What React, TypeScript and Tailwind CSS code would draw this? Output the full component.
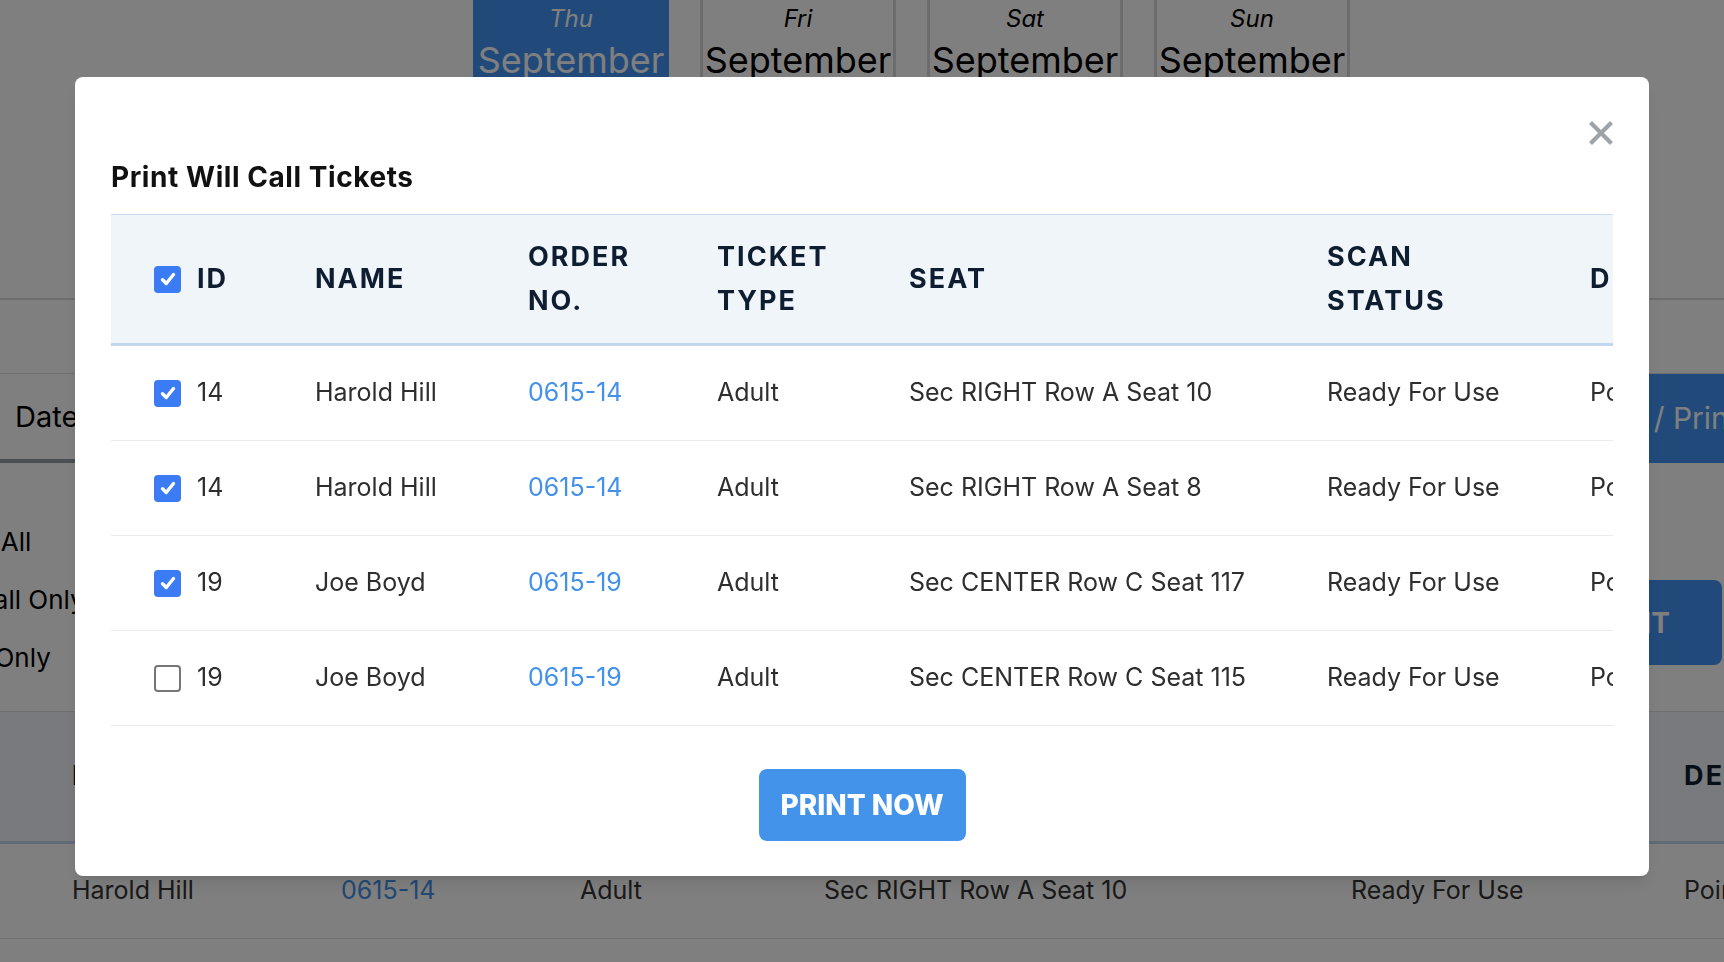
import clsx from 'clsx';

type Ticket = {
  id: number;
  name: string;
  order: string;
  type: string;
  seat: string;
  status: string;
  delivery: string;
  checked: boolean;
};

const tickets: Ticket[] = [
  { id: 14, name: 'Harold Hill', order: '0615-14', type: 'Adult', seat: 'Sec RIGHT Row A Seat 10', status: 'Ready For Use', delivery: 'Point of Sale', checked: true },
  { id: 14, name: 'Harold Hill', order: '0615-14', type: 'Adult', seat: 'Sec RIGHT Row A Seat 8', status: 'Ready For Use', delivery: 'Point of Sale', checked: true },
  { id: 19, name: 'Joe Boyd', order: '0615-19', type: 'Adult', seat: 'Sec CENTER Row C Seat 117', status: 'Ready For Use', delivery: 'Point of Sale', checked: true },
  { id: 19, name: 'Joe Boyd', order: '0615-19', type: 'Adult', seat: 'Sec CENTER Row C Seat 115', status: 'Ready For Use', delivery: 'Point of Sale', checked: false },
];

const days = [
  { day: 'Thu', month: 'September', active: true },
  { day: 'Fri', month: 'September', active: false },
  { day: 'Sat', month: 'September', active: false },
  { day: 'Sun', month: 'September', active: false },
];

// column tracks of the modal table (first one holds checkbox + id)
const modalCols = 'grid-cols-[204px_213px_189px_192px_418px_263px_260px]';
const pageCols = 'grid-cols-[269px_239px_244px_527px_333px_300px]';

function Checkbox({ checked }: { checked: boolean }) {
  if (!checked) {
    return <span className="h-[27px] w-[27px] shrink-0 rounded-[4px] border-2 border-[#767676] bg-white" />;
  }
  return (
    <span className="flex h-[27px] w-[27px] shrink-0 items-center justify-center rounded-[4px] bg-[#3b7bf4]">
      <svg viewBox="0 0 16 16" className="h-[20px] w-[20px]" fill="none" stroke="white" strokeWidth="2.7" strokeLinecap="round" strokeLinejoin="round">
        <path d="M3.6 8.6 6.6 11.6 12.4 4.4" />
      </svg>
    </span>
  );
}

function HeaderCell({ lines, className }: { lines: string[]; className?: string }) {
  return (
    <div className={className}>
      {lines.map((l) => (
        <span key={l} className="block">
          {l}
        </span>
      ))}
    </div>
  );
}

function BackgroundPage() {
  return (
    <div className="h-[962px] w-full overflow-hidden bg-white text-black">
      {/* date tabs */}
      <div className="h-[300px] border-b-2 border-[#dcdcdc]">
        <div className="flex gap-[31px] pl-[473px]">
          {days.map((d) => (
            <div
              key={d.day}
              className={clsx(
                'flex h-[130px] w-[196px] flex-col items-center pt-[5px]',
                d.active ? 'bg-[#4294f4] text-white' : 'border-x-[3px] border-[#d8d8d8]'
              )}
            >
              <span className="text-[24px] italic leading-[28px]">{d.day}</span>
              <span className="mt-[6px] whitespace-nowrap text-[36px] leading-[42px]">{d.month}</span>
            </div>
          ))}
        </div>
      </div>

      {/* tab bar */}
      <div className="mt-[73px] flex h-[90px] border-t border-[#dcdcdc]">
        <div className="flex w-[200px] items-center border-b-4 border-[#969ca4] pl-[15px] text-[29px]">Date</div>
        <div className="ml-auto -mr-[182px] flex w-[360px] items-center bg-[#4294f4] pl-[28px] text-[30px] text-white">
          Scan / Print Tickets
        </div>
      </div>

      {/* filters */}
      <div className="mt-[50px] flex items-start justify-between">
        <div className="-ml-[75px] flex flex-col text-[26px] leading-[58px]">
          <span>Show All</span>
          <span className="-ml-[2px]">Will Call Only</span>
          <span className="-ml-[2px]">Used Only</span>
        </div>
        <div className="mr-[2px] mt-[67px] flex h-[85px] items-center rounded-lg bg-[#4294f4] px-[52px] text-[28px] font-bold text-white">
          PRINT
        </div>
      </div>

      {/* tickets table */}
      <div className="mt-[24px] border-t border-[#dcdcdc]">
        <div className={clsx('grid h-[132px] items-center border-b-[3px] border-[#c3d6ef] bg-[#f0f5fa] pl-[72px] text-[27px] font-bold uppercase tracking-[0.08em] text-[#0f1d31]', pageCols)}>
          <span>Name</span>
          <span>Order No.</span>
          <span>Ticket Type</span>
          <span>Seat</span>
          <span>Scan Status</span>
          <span>Delivery</span>
        </div>
        <div className={clsx('grid h-[95px] items-center border-b border-[#e2e2e2] pl-[72px] text-[25px] text-[#333]', pageCols)}>
          <span>Harold Hill</span>
          <span className="text-[#4391e8]">0615-14</span>
          <span>Adult</span>
          <span>Sec RIGHT Row A Seat 10</span>
          <span>Ready For Use</span>
          <span>Point of Sale</span>
        </div>
      </div>
    </div>
  );
}

export default function App() {
  return (
    <div className="relative font-[Inter,sans-serif]">
      <BackgroundPage />

      <div className="fixed inset-0 z-10 flex items-start justify-center bg-black/50 pt-[77px]">
        <div className="relative w-[1574px] rounded-lg bg-white px-[36px] pb-[35px] pt-[82px] shadow-lg">
          <button className="absolute right-[36px] top-[44px] h-[24px] w-[24px] text-[#9ea3aa]" aria-label="Close">
            <svg viewBox="0 0 24 24" className="h-full w-full" fill="none" stroke="currentColor" strokeWidth="4.2">
              <path d="M1.5 1.5 22.5 22.5M22.5 1.5 1.5 22.5" />
            </svg>
          </button>

          <h2 className="mb-[19px] text-[28px] font-bold leading-[36px] tracking-[0.02em] text-[#111]">Print Will Call Tickets</h2>

          <div className="overflow-hidden">
            <div className={clsx('grid h-[132px] w-max items-center border-t border-b-[3px] border-t-[#cadcf2] border-b-[#c3d6ef] bg-[#f0f5fa] text-[27px] font-bold uppercase leading-[44px] tracking-[0.075em] text-[#0f1d31]', modalCols)}>
              <div className="flex items-center gap-[16px] pl-[43px]">
                <Checkbox checked />
                <span>ID</span>
              </div>
              <HeaderCell lines={['Name']} />
              <HeaderCell lines={['Order', 'No.']} />
              <HeaderCell lines={['Ticket', 'Type']} />
              <HeaderCell lines={['Seat']} />
              <HeaderCell lines={['Scan', 'Status']} />
              <HeaderCell lines={['Delivery']} />
            </div>

            {tickets.map((t, i) => (
              <div key={i} className={clsx('grid h-[95px] w-max items-center border-b border-[#e8eaed] text-[25px] text-[#2e2e2e]', modalCols)}>
                <div className="flex items-center gap-[16px] pl-[43px]">
                  <Checkbox checked={t.checked} />
                  <span>{t.id}</span>
                </div>
                <span>{t.name}</span>
                <span className="text-[#4391e8]">{t.order}</span>
                <span>{t.type}</span>
                <span>{t.seat}</span>
                <span>{t.status}</span>
                <span>{t.delivery}</span>
              </div>
            ))}
          </div>

          <button className="mx-auto mt-[43px] flex h-[72px] w-[207px] items-center justify-center rounded-lg bg-[#4493ea] text-[28px] font-extrabold text-white">
            PRINT NOW
          </button>
        </div>
      </div>
    </div>
  );
}
